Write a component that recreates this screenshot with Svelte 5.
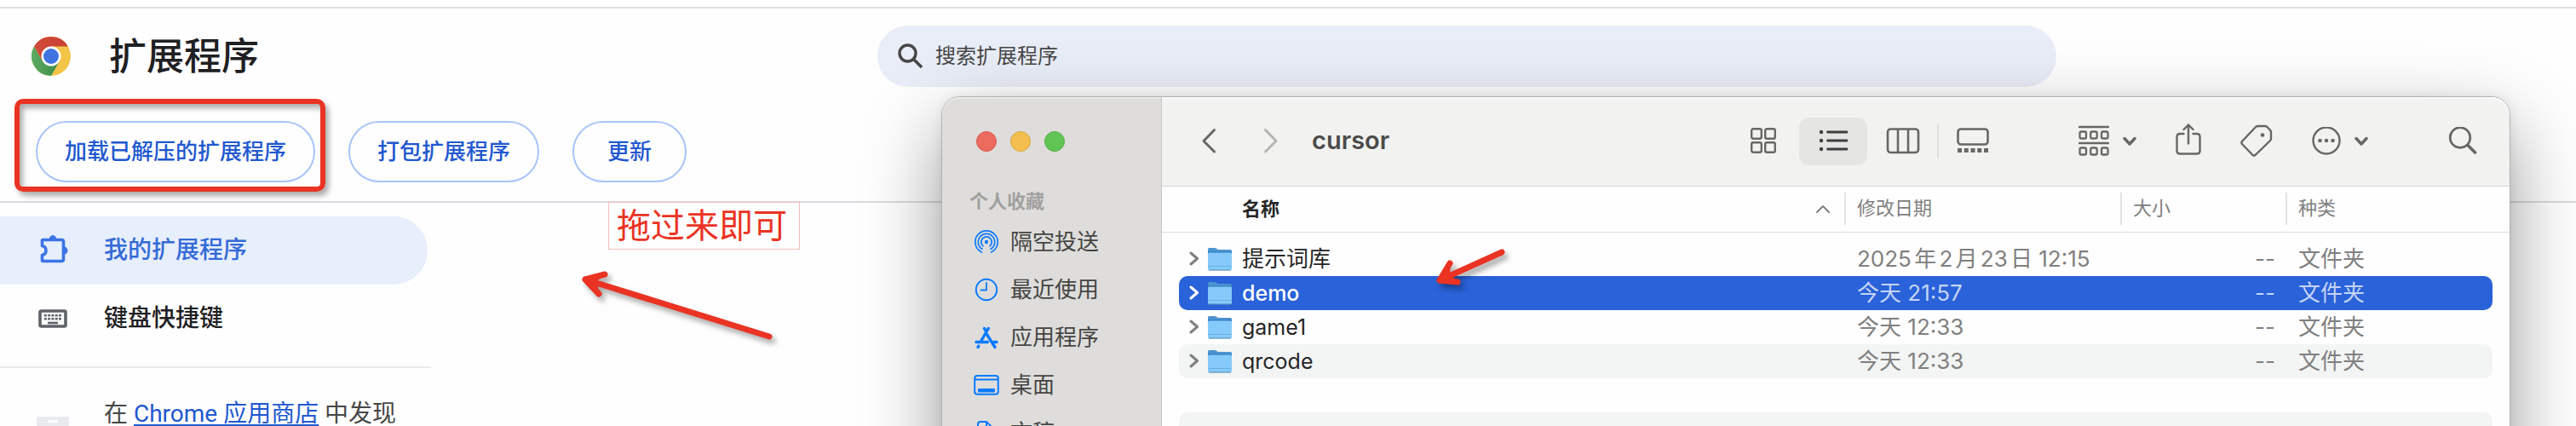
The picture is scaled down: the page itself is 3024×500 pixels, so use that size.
<script>
  const places = [
    { id: 'airdrop', label: '隔空投送' },
    { id: 'recent', label: '最近使用' },
    { id: 'apps', label: '应用程序' },
    { id: 'desktop', label: '桌面' },
    { id: 'documents', label: '文稿' }
  ];

  const files = [
    { name: '提示词库', date: '2025年2月23日 12:15', size: '--', kind: '文件夹' },
    { name: 'demo', date: '今天 21:57', size: '--', kind: '文件夹', latin: true, selected: true },
    { name: 'game1', date: '今天 12:33', size: '--', kind: '文件夹', latin: true },
    { name: 'qrcode', date: '今天 12:33', size: '--', kind: '文件夹', latin: true }
  ];
</script>

{#snippet caret()}
  <svg class="caret" width="16" height="12" viewBox="0 0 16 12" aria-hidden="true">
    <path d="M2 2.5 8 9 14 2.5" fill="none" stroke="currentColor" stroke-width="3.400" stroke-linecap="round" stroke-linejoin="round" />
  </svg>
{/snippet}

<div class="page">
  <header>
    <div class="brand">
      <svg width="46" height="46" viewBox="0 0 46 46" aria-hidden="true">
        <defs>
          <linearGradient id="lr" x1="0" x2="1"><stop offset="0" stop-color="#d04a3d" /><stop offset="1" stop-color="#c9402f" /></linearGradient>
          <linearGradient id="lg" x1="0" x2="1"><stop offset="0" stop-color="#5cab64" /><stop offset="1" stop-color="#3e8c47" /></linearGradient>
        </defs>
        <circle cx="23" cy="23" r="23" fill="#f4c449" />
        <path d="M3.080 11.500A23 23 0 0 0 23 46L32.960 28.750 23 23 13.040 28.750Z" fill="url(#lg)" />
        <path d="M3.080 11.500A23 23 0 0 1 42.920 11.500H23L13.040 28.750Z" fill="url(#lr)" />
        <circle cx="23" cy="23" r="11.500" fill="#fff" />
        <circle cx="23" cy="23" r="9" fill="#3f74e0" />
      </svg>
      <h1>扩展程序</h1>
    </div>
    <label class="search">
      <svg width="30" height="30" viewBox="0 0 30 30" aria-hidden="true">
        <circle cx="11.500" cy="11.500" r="9.500" fill="none" stroke="#474747" stroke-width="3.400" />
        <path d="M18.500 18.500 28 28" stroke="#474747" stroke-width="3.600" />
      </svg>
      <input type="search" placeholder="搜索扩展程序" aria-label="搜索扩展程序" />
    </label>
  </header>

  <div class="actions">
    <div class="marked">
      <button>加载已解压的扩展程序</button>
      <span class="frame"></span>
    </div>
    <button>打包扩展程序</button>
    <button>更新</button>
  </div>

  <nav>
    <a class="item current" href="#extensions">
      <svg width="38" height="38" viewBox="0 0 38 38" aria-hidden="true">
        <path d="M7.500 6.500H29.500Q31.500 6.500 31.500 8.500V29.500Q31.500 31.500 29.500 31.500H7.500Q6.500 31.500 6.500 30.500V24.500Q11 23.500 11 19T6.500 13.500V7.500Q6.500 6.500 7.500 6.500Z" fill="none" stroke="currentColor" stroke-width="3.600" stroke-linejoin="round" />
        <path d="M14.700 6A4.200 5 0 0 1 23.300 6Z M32 14.500A4.500 4.500 0 0 1 32 23.500Z" fill="currentColor" />
      </svg>
      我的扩展程序
    </a>
    <a class="item" href="#shortcuts">
      <svg class="grey" width="38" height="38" viewBox="0 0 38 38" aria-hidden="true">
        <rect x="4" y="10" width="30" height="18" rx="1.500" fill="none" stroke="currentColor" stroke-width="3.600" />
        <path d="M8.800 15.200H29.500M8.800 19.200H29.500" stroke="currentColor" stroke-width="2.600" stroke-dasharray="3 1.300" />
        <path d="M13 24H25" stroke="currentColor" stroke-width="2.600" />
      </svg>
      键盘快捷键
    </a>
    <p class="store">
      <svg width="38" height="38" viewBox="0 0 38 38" aria-hidden="true">
        <path d="M0 0H38V38H0Z" fill="#e8eaed" />
        <rect x="13" y="4" width="12" height="3" rx="1.500" fill="#fff" />
      </svg>
      <span>在 <a href="#store">Chrome 应用商店</a> 中发现</span>
    </p>
  </nav>

  <div class="note">拖过来即可</div>

  <section class="window" aria-label="cursor">
    <aside>
      <div class="lights">
        <button class="close" aria-label="关闭"></button>
        <button class="minimise" aria-label="最小化"></button>
        <button class="zoom" aria-label="缩放"></button>
      </div>
      <h2>个人收藏</h2>
      <ul>
        {#each places as place}
          <li>
            <a href={'#' + place.id}>
              <svg width="32" height="32" viewBox="0 0 32 32" fill="none" stroke="#0a7aff" stroke-width="2" stroke-linecap="round" stroke-linejoin="round" aria-hidden="true">
                {#if place.id === 'airdrop'}
                  <g stroke-width="1.700">
                    <path d="M10.500 28A13.200 13.200 0 1 1 21.500 28" />
                    <path d="M11 24.300A9.700 9.700 0 1 1 21 24.300" />
                    <path d="M12 20.800A6.200 6.200 0 1 1 20 20.800" />
                  </g>
                  <circle cx="16" cy="16" r="2.200" fill="#0a7aff" stroke="none" />
                {:else if place.id === 'recent'}
                  <circle cx="16" cy="16" r="12.200" />
                  <path d="M16 8V16.500H9.500" stroke-width="1.800" />
                {:else if place.id === 'apps'}
                  <g stroke-width="3.400">
                    <path d="M13.500 5.500 16 9.500M18.300 5.500 9.500 20.500M4 21.500H17.500M6.800 26.200 6 27.500M16.500 12.500 26 27.500M24.500 21.500H28" />
                  </g>
                {:else if place.id === 'desktop'}
                  <rect x="2.200" y="5" width="27.600" height="21.800" rx="3" />
                  <path d="M3 9.500H29" />
                  <rect x="7" y="21" width="18" height="2.500" fill="#0a7aff" />
                {:else}
                  <path d="M6 30V6Q6 3 9 3H16L25 12V30M16 3V10Q16 12 18 12H25" />
                {/if}
              </svg>
              {place.label}
            </a>
          </li>
        {/each}
      </ul>
    </aside>

    <div class="content">
      <div class="toolbar">
        <button aria-label="返回">
          <svg width="18" height="32" viewBox="0 0 18 32"><path d="M15.500 2.500 3 15.500 15.500 28" fill="none" stroke="currentColor" stroke-width="3" stroke-linecap="round" stroke-linejoin="round" /></svg>
        </button>
        <button class="off" aria-label="前进" disabled>
          <svg width="18" height="32" viewBox="0 0 18 32"><path d="M2.500 2.500 15 15.500 2.500 28" fill="none" stroke="currentColor" stroke-width="3" stroke-linecap="round" stroke-linejoin="round" /></svg>
        </button>
        <h3>cursor</h3>

        <div class="views">
          <button aria-label="图标">
            <svg width="32" height="32" viewBox="0 0 32 32" fill="none" stroke="currentColor" stroke-width="2.400">
              <rect x="2.200" y="1.200" width="11.600" height="11.600" rx="2" /><rect x="18.200" y="1.200" width="11.600" height="11.600" rx="2" />
              <rect x="2.200" y="17.200" width="11.600" height="11.600" rx="2" /><rect x="18.200" y="17.200" width="11.600" height="11.600" rx="2" />
            </svg>
          </button>
          <button class="active" aria-label="列表">
            <svg width="36" height="32" viewBox="0 0 36 32">
              <path d="M11.500 5H34M11.500 15H34M11.500 25H34" stroke="#3e3e3e" stroke-width="2.800" stroke-linecap="round" />
              <circle cx="4" cy="5" r="2.200" fill="#3e3e3e" /><circle cx="4" cy="15" r="2.200" fill="#3e3e3e" /><circle cx="4" cy="25" r="2.200" fill="#3e3e3e" />
            </svg>
          </button>
          <button aria-label="分栏">
            <svg width="40" height="32" viewBox="0 0 40 32" fill="none" stroke="currentColor" stroke-width="2.600">
              <rect x="2" y="1.500" width="36" height="27.500" rx="3.500" /><path d="M14 2V29M26 2V29" />
            </svg>
          </button>
          <span class="rule"></span>
          <button aria-label="画廊">
            <svg width="40" height="32" viewBox="0 0 40 32">
              <rect x="2.500" y="1.500" width="35" height="18" rx="3.500" fill="none" stroke="currentColor" stroke-width="2.600" />
              <path d="M2 26.500H38" stroke="currentColor" stroke-width="5" stroke-dasharray="5 2.750" />
            </svg>
          </button>
        </div>

        <button aria-label="分组">
          <svg width="36" height="38" viewBox="0 0 36 38" fill="none" stroke="currentColor" stroke-width="2.300">
            <path d="M1 2H35M1 21H35" stroke-linecap="round" />
            <rect x="1.500" y="7.500" width="7.500" height="8" rx="1.800" /><rect x="14.200" y="7.500" width="7.500" height="8" rx="1.800" /><rect x="27" y="7.500" width="7.500" height="8" rx="1.800" />
            <rect x="1.500" y="26.500" width="7.500" height="8" rx="1.800" /><rect x="14.200" y="26.500" width="7.500" height="8" rx="1.800" /><rect x="27" y="26.500" width="7.500" height="8" rx="1.800" />
          </svg>
          {@render caret()}
        </button>
        <button aria-label="共享">
          <svg width="30" height="42" viewBox="0 0 30 42" fill="none" stroke="currentColor" stroke-width="2.400" stroke-linecap="round" stroke-linejoin="round">
            <path d="M9.500 12H5Q1.500 12 1.500 15.500V32Q1.500 35.500 5 35.500H25Q28.500 35.500 28.500 32V15.500Q28.500 12 25 12H20.500" />
            <path d="M15 23.500V1.500M9.500 7 15 1.500 20.500 7" />
          </svg>
        </button>
        <button aria-label="标签">
          <svg width="38" height="42" viewBox="0 0 38 42" fill="none" stroke="currentColor" stroke-width="2.400" stroke-linejoin="round">
            <path d="M20.500 3H29Q30.500 3 31.500 4L35.200 8Q36 9 36 10.500V17.500Q36 19 35 20L17.500 37Q16 38.200 14.500 37L1.900 24Q.9 22.500 1.900 21L18 4Q19 3 20.500 3Z" />
            <circle cx="26" cy="13.500" r="2.300" fill="currentColor" stroke="none" />
          </svg>
        </button>
        <button aria-label="更多">
          <svg width="34" height="34" viewBox="0 0 34 34">
            <circle cx="17" cy="16" r="15.500" fill="none" stroke="currentColor" stroke-width="2.400" />
            <circle cx="9.500" cy="16" r="2.300" fill="currentColor" /><circle cx="17" cy="16" r="2.300" fill="currentColor" /><circle cx="24.500" cy="16" r="2.300" fill="currentColor" />
          </svg>
          {@render caret()}
        </button>
        <button class="find" aria-label="搜索">
          <svg width="34" height="34" viewBox="0 0 34 34" fill="none" stroke="currentColor" stroke-linecap="round">
            <circle cx="14" cy="12.500" r="11.800" stroke-width="2.700" /><path d="M23 21.500 31.500 30" stroke-width="3.600" />
          </svg>
        </button>
      </div>

      <div class="list">
        <table>
          <colgroup><col /><col class="c-date" /><col class="c-size" /><col class="c-kind" /></colgroup>
          <thead>
            <tr>
              <th class="primary"><div>名称
                <svg width="16" height="10" viewBox="0 0 16 10" aria-hidden="true"><path d="M1 9 8 2 15 9" fill="none" stroke="#808080" stroke-width="2" stroke-linecap="round" stroke-linejoin="round" /></svg>
              </div></th>
              <th><div>修改日期</div></th>
              <th><div>大小</div></th>
              <th><div>种类</div></th>
            </tr>
          </thead>
          <tbody>
            {#each files as file}
              <tr class:selected={file.selected}>
                <td>
                  <div class="name" class:latin={file.latin}>
                    <svg class="twist" width="12" height="18" viewBox="0 0 12 18" aria-hidden="true"><path d="M2 2 9.500 8.500 2 15" fill="none" stroke="currentColor" stroke-width="3" stroke-linecap="round" stroke-linejoin="round" /></svg>
                    <svg width="30" height="30" viewBox="0 0 30 30" aria-hidden="true">
                      <path d="M1 27V3.500Q1 2 2.500 2H9Q10.300 2 11.200 2.800L12 3.500Q12.800 4 14 4H27.500Q29 4 29 5.500V27Z" fill="#4b94d0" />
                      <path d="M1 6.500H29V10H1Z" fill="#2f79bd" />
                      <rect x="1" y="7.500" width="28" height="20.500" rx="1.500" fill="#85cafa" />
                      <path d="M1.500 23.500H28.500" stroke="#69b0e3" stroke-width="1" />
                      <path d="M2 28H28" stroke="#5d93bd" stroke-width="1.200" />
                    </svg>
                    <span>{file.name}</span>
                  </div>
                </td>
                <td>{file.date}</td>
                <td class="size">{file.size}</td>
                <td>{file.kind}</td>
              </tr>
            {/each}
            <tr><td></td><td></td><td></td><td></td></tr>
            <tr><td></td><td></td><td></td><td></td></tr>
          </tbody>
        </table>
      </div>
    </div>
  </section>

  <svg class="arrow far" width="240" height="100" viewBox="0 0 240 100" aria-hidden="true">
    <path d="M16 18 232 85M16 18 39 12M16 18 32 35" />
    <path d="M16 18 39 12 28 20 32 35Z" class="solid" />
  </svg>
  <svg class="arrow near" width="100" height="60" viewBox="0 0 100 60" aria-hidden="true">
    <path d="M10 40 83 7M10 40 22 20M10 40 31 42" />
    <path d="M10 39 22 22 21 34 30 41Z" class="solid" />
  </svg>
</div>

<style>
  :global(body) {
    margin: 0;
    overflow: hidden;
  }
  .page {
    position: relative;
    box-sizing: border-box;
    height: 100vh;
    padding-top: 8px;
    overflow: hidden;
    background: #fefefe;
    color: #1f2023;
    font: 400 26px/40px Inter, "Noto Sans CJK SC", sans-serif;
  }
  h1, h2, h3, p, ul {
    margin: 0;
    padding: 0;
  }
  button {
    border: 0;
    padding: 0;
    background: none;
    color: inherit;
    font: inherit;
  }
  a {
    color: inherit;
    text-decoration: none;
  }
  svg {
    display: block;
    flex: none;
  }

  header {
    display: grid;
    grid-template-columns: 1030px 1fr;
    align-items: center;
    height: 112px;
    padding-right: 610px;
    border-top: 2px solid #dfdfe1;
  }
  .brand {
    display: flex;
    align-items: center;
    gap: 45px;
    padding-left: 37px;
  }
  h1 {
    font-size: 44px;
    line-height: 60px;
    font-weight: 500;
  }
  .search {
    display: flex;
    align-items: center;
    gap: 14px;
    height: 72px;
    padding: 0 24px;
    border-radius: 36px;
    background: #e9edf7;
  }
  .search input {
    flex: 1;
    min-width: 0;
    border: 0;
    padding: 0;
    outline: 0;
    background: none;
    font: inherit;
    font-size: 24px;
  }
  .search input::placeholder {
    color: #474747;
    opacity: 1;
  }

  .actions {
    display: flex;
    gap: 39px;
    padding: 20px 42px 22px;
    border-bottom: 2px solid #d9dae0;
  }
  .actions button {
    box-sizing: border-box;
    min-width: 134px;
    height: 72px;
    padding: 0 32px;
    border: 2px solid #a9c4f8;
    border-radius: 36px;
    color: #2158cf;
    font-weight: 500;
  }
  .marked {
    position: relative;
  }
  .frame {
    position: absolute;
    inset: -26px -12px -11px -25px;
    border: 6px solid #ea3323;
    border-radius: 10px;
    box-shadow: 4px 5px 6px rgba(0, 0, 0, 0.32), inset 4px 5px 6px rgba(0, 0, 0, 0.32);
    pointer-events: none;
  }

  nav {
    width: 506px;
    padding-top: 16px;
    font-family: Roboto, "Noto Sans CJK SC", sans-serif;
    font-size: 28px;
  }
  .item {
    display: flex;
    align-items: center;
    gap: 41px;
    height: 80px;
    margin-right: 4px;
    padding-left: 43px;
    font-weight: 500;
  }
  .current {
    border-radius: 0 40px 40px 0;
    background: #e7eefc;
    color: #346bd6;
  }
  .current svg {
    color: #3b74e4;
  }
  .grey {
    color: #5f6368;
  }
  .store {
    display: flex;
    align-items: center;
    gap: 41px;
    height: 108px;
    margin-top: 16px;
    padding-left: 43px;
    border-top: 2px solid #ebebec;
    color: #474747;
  }
  .store svg {
    align-self: end;
    padding-bottom: 13px;
  }
  .store a {
    color: #2158cf;
    text-decoration: underline;
    text-decoration-thickness: 2px;
    text-underline-offset: 3px;
  }

  .note {
    position: absolute;
    top: 237px;
    left: 714px;
    padding: 0 14px 0 9px;
    border: 1px solid #f7bdb9;
    color: #ea3323;
    font-size: 40px;
    line-height: 54px;
  }

  .window {
    position: absolute;
    inset: 113px 77px -300px 1105px;
    display: flex;
    border: 1px solid #b3b3b3;
    border-radius: 22px;
    background: #fefefe;
    box-shadow: 0 36px 90px rgba(0, 0, 0, 0.4), 0 0 12px rgba(0, 0, 0, 0.08);
  }
  aside {
    box-sizing: border-box;
    width: 258px;
    padding: 40px 0 0 32px;
    border-right: 1px solid #c6c6c5;
    border-radius: 21px 0 0 21px;
    background: #dedddb;
    box-shadow: inset 0 2px 0 #e9e9e8;
  }
  .lights {
    display: flex;
    gap: 16px;
    padding-left: 8px;
  }
  .lights button {
    box-sizing: border-box;
    width: 24px;
    height: 24px;
    border: 1px solid #d9574d;
    border-radius: 50%;
    background: #ec6a5e;
  }
  .lights .minimise {
    border-color: #dba63c;
    background: #f4bf4f;
  }
  .lights .zoom {
    border-color: #51ad43;
    background: #61c555;
  }
  h2 {
    margin-top: 38px;
    color: #a1a09e;
    font-size: 22px;
    font-weight: 700;
    line-height: 40px;
  }
  ul {
    list-style: none;
  }
  li a {
    display: flex;
    align-items: center;
    gap: 12px;
    height: 56px;
    padding-left: 4px;
    color: #454543;
  }

  .content {
    flex: 1;
    min-width: 0;
  }
  .toolbar {
    display: flex;
    align-items: center;
    gap: 46px;
    height: 104px;
    padding: 0 38px 0 46px;
    border-bottom: 1px solid #d6d6d5;
    border-radius: 0 21px 0 0;
    background: #f2f2f1;
    box-shadow: inset 0 2px 0 #fafafa;
    color: #676765;
  }
  .toolbar button {
    display: flex;
    align-items: center;
    gap: 16px;
  }
  .toolbar .off {
    margin-left: 9px;
    color: #b5b5b4;
  }
  h3 {
    margin-left: -7px;
    padding-bottom: 2px;
    color: #4b4b4a;
    font-size: 29px;
    font-weight: 600;
  }
  .views {
    display: flex;
    align-items: center;
    gap: 2px;
    margin: 0 38px 0 auto;
  }
  .views button {
    justify-content: center;
    width: 80px;
    height: 56px;
    border-radius: 12px;
  }
  .views .active {
    background: #e5e5e4;
  }
  .rule {
    width: 2px;
    height: 40px;
    margin: 0 -2px;
    background: #e0e0df;
  }
  .toolbar .find {
    margin-left: 48px;
  }

  .list {
    padding: 0 20px;
    background: linear-gradient(#dcdcdc, #dcdcdc) 0 53px / 100% 1px no-repeat;
  }
  table {
    width: 100%;
    table-layout: fixed;
    border-collapse: separate;
    border-spacing: 0;
    color: #808080;
  }
  .c-date {
    width: 324px;
  }
  .c-size {
    width: 194px;
  }
  .c-kind {
    width: 243px;
  }
  th {
    height: 54px;
    padding: 0;
    font-size: 22px;
    font-weight: 400;
    text-align: left;
  }
  th div {
    height: 38px;
    margin-bottom: 2px;
    padding-left: 13px;
    border-left: 2px solid #e3e3e3;
    line-height: 36px;
  }
  .primary div {
    display: flex;
    align-items: center;
    justify-content: space-between;
    padding: 0 17px 0 72px;
    color: #262626;
    font-weight: 700;
    border-color: transparent;
  }
  tbody::before {
    display: block;
    height: 11px;
    content: "";
  }
  td {
    height: 40px;
    padding: 0 0 0 15px;
    line-height: 40px;
    white-space: nowrap;
    text-autospace: normal;
  }
  td:first-child {
    padding-left: 12px;
    border-radius: 10px 0 0 10px;
  }
  td:last-child {
    border-radius: 0 10px 10px 0;
  }
  tbody tr:nth-child(even) td {
    background: #f3f4f4;
  }
  tbody .selected td,
  tbody tr.selected:nth-child(even) td {
    background: #2a62d9;
    color: #c5d4f6;
  }
  td.size {
    padding-right: 12px;
    text-align: right;
  }
  .name {
    display: flex;
    align-items: center;
    gap: 9px;
    height: 40px;
  }
  .name span {
    padding-left: 2px;
    color: #262626;
  }
  .latin {
    font-size: 25px;
  }
  .selected .name span,
  .selected .twist {
    color: #fff;
  }
  .selected .name span {
    font-weight: 500;
  }

  .arrow {
    position: absolute;
    fill: none;
    stroke: #ea3323;
    stroke-width: 7;
    stroke-linecap: round;
    stroke-linejoin: round;
    filter: drop-shadow(4px 5px 3px rgba(0, 0, 0, 0.35));
    pointer-events: none;
  }
  .solid {
    fill: #ea3323;
    stroke-width: 2;
  }
  .far {
    top: 310px;
    left: 671px;
  }
  .near {
    top: 289px;
    left: 1680px;
  }
</style>
